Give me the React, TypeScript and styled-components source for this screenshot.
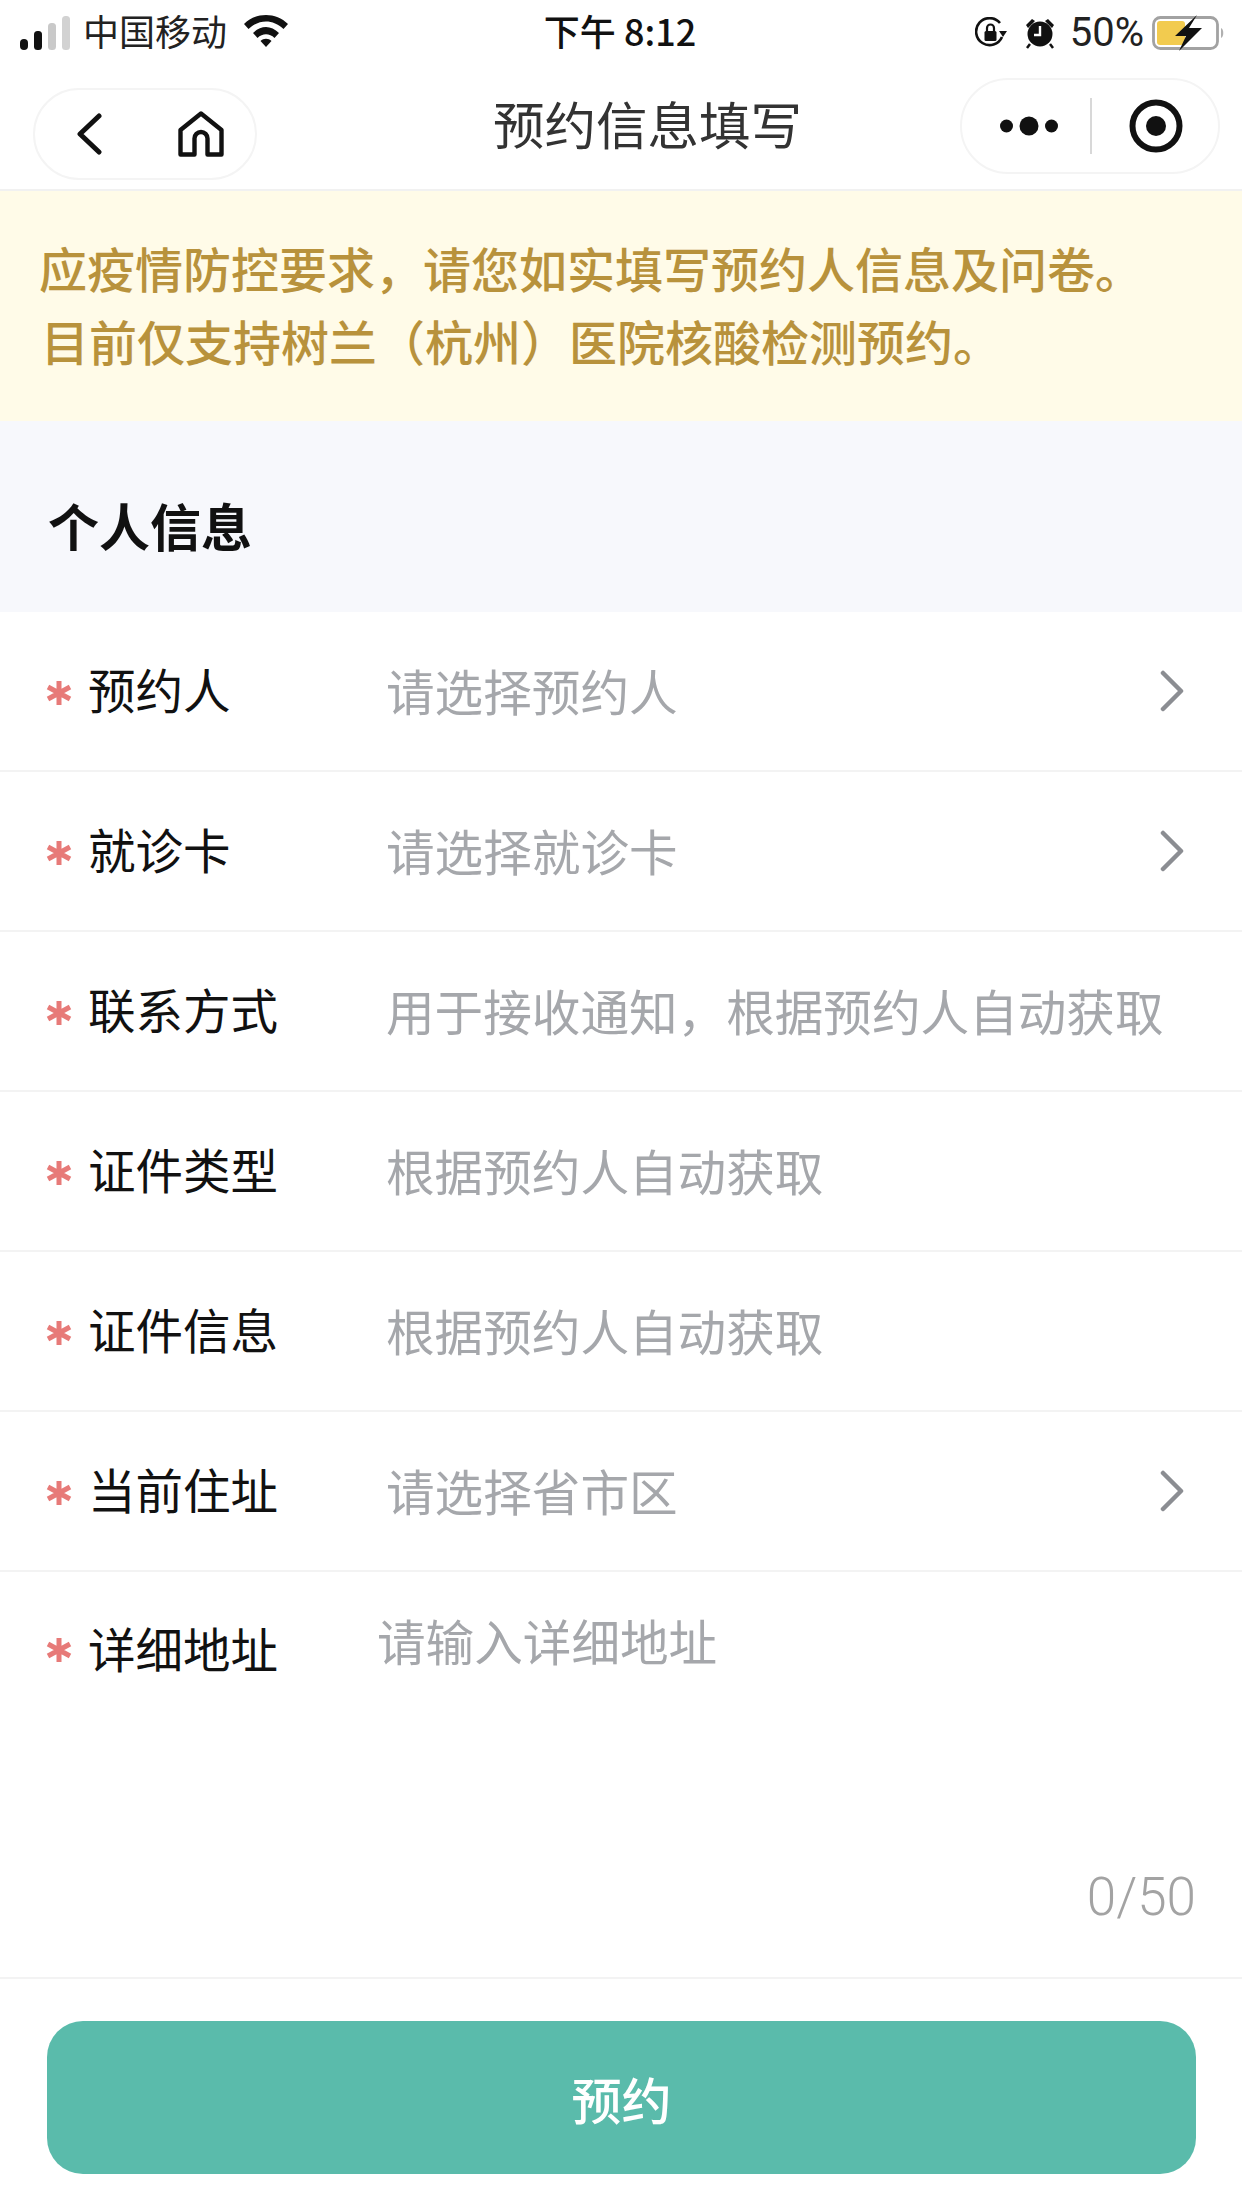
import React from 'react'
import styled, { createGlobalStyle } from 'styled-components'

const GlobalStyle = createGlobalStyle`
  html, body {
    margin: 0;
    padding: 0;
    background: #fff;
  }
  body {
    font-family: "Noto Sans CJK SC", "Noto Sans", sans-serif;
  }
`

const Page = styled.div`
  width: 1242px;
  height: 2208px;
  background: #fff;
  display: flex;
  flex-direction: column;
  overflow: hidden;
`

const StatusBar = styled.div`
  height: 66px;
  padding: 0 16px 0 20px;
  display: grid;
  grid-template-columns: 1fr auto 1fr;
  align-items: center;
  color: #111;
  font-size: 36px;
  line-height: 1;
`

const StatusSide = styled.div<{ $end?: boolean }>`
  display: flex;
  align-items: center;
  justify-content: ${(props) => (props.$end ? 'flex-end' : 'flex-start')};
`

const Carrier = styled.span`
  margin: 0 16px 6px 11px;
  font-size: 36px;
  color: #222;
`

const Clock = styled.span`
  font-family: "Noto Sans CJK SC", sans-serif;
  font-weight: 500;
  font-size: 36px;
  margin: 0 6px 6px 0;
  color: #111;
`

const Percent = styled.span`
  font-family: "Roboto", sans-serif;
  font-size: 40px;
  margin: 0 8px 0 15px;
  color: #222;
`

const AlarmGap = styled.span`
  width: 18px;
`

const WifiWrap = styled.span`
  display: flex;
  margin-bottom: 6px;
`

const NavBar = styled.div`
  height: 123px;
  display: flex;
  align-items: flex-start;
  border-bottom: 2px solid #f1f1f1;
  position: relative;
`

const Capsule = styled.div<{ $width: number; $height: number; $top: number }>`
  box-sizing: border-box;
  width: ${(props) => props.$width}px;
  height: ${(props) => props.$height}px;
  margin-top: ${(props) => props.$top}px;
  border: 2px solid #f4f4f4;
  border-radius: 48px;
  display: flex;
  align-items: center;
  flex: none;
`

const LeftCapsule = styled(Capsule)`
  margin-left: 33px;
  padding-left: 41px;
  gap: 76px;
`

const RightCapsule = styled(Capsule)`
  margin-right: 22px;
  padding-left: 38px;
`

const NavTitle = styled.h1`
  flex: 1;
  margin: 22px 0 0;
  padding: 2px 0 0 78px;
  text-align: center;
  font-size: 51.5px;
  line-height: 66px;
  font-weight: 400;
  color: #333;
`

const MoreDivider = styled.div`
  width: 2px;
  height: 56px;
  background: #d8d8d8;
  margin: 0 37px 0 32px;
`

const Notice = styled.div`
  height: 230px;
  box-sizing: border-box;
  padding: 40px 30px 0 39px;
  background: #fffbe8;
  color: #b8923c;
  font-size: 48px;
  line-height: 73px;
  font-weight: 500;
  white-space: nowrap;
`

const NoticeLine = styled.div<{ $indent?: number }>`
  padding-left: ${(props) => props.$indent ?? 0}px;
`

const SectionHead = styled.div`
  height: 191px;
  box-sizing: border-box;
  padding: 68px 0 0 48px;
  background: #f7f8fc;
  font-size: 51px;
  line-height: 72px;
  font-weight: 700;
  color: #111;
`

const Row = styled.div`
  height: 160px;
  box-sizing: border-box;
  display: flex;
  align-items: center;
  padding: 0 58px 0 46px;
  border-bottom: 2px solid #f3f3f3;
`

const Star = styled.span`
  width: 26px;
  height: 26px;
  flex: none;
  margin-right: 16px;
  margin-top: 4px;
  display: flex;
`

const Label = styled.span`
  width: 298px;
  flex: none;
  font-size: 47.5px;
  line-height: 64px;
  margin-bottom: 4px;
  color: #111;
`

const Value = styled.span`
  flex: 1;
  font-size: 48.6px;
  line-height: 64px;
  margin-bottom: 2px;
  color: #a5a7ab;
  white-space: nowrap;
`

const Chevron = styled.svg`
  width: 24px;
  height: 42px;
  flex: none;
`

const AddressRow = styled.div`
  height: 407px;
  box-sizing: border-box;
  padding: 44px 46px 0 46px;
  border-bottom: 2px solid #f3f3f3;
  display: flex;
  flex-direction: column;
`

const AddressTop = styled.div`
  display: flex;
  align-items: flex-start;
  flex: 1;
`

const AddressLabel = styled(Label)`
  width: 289px;
  margin: 0;
`

const AddressStar = styled(Star)`
  margin-top: 21px;
`

const AddressHint = styled.span`
  font-size: 48.6px;
  line-height: 56px;
  color: #a5a7ab;
  margin-top: -4px;
`

const Counter = styled.div`
  align-self: flex-end;
  font-family: "Roboto", sans-serif;
  font-size: 53px;
  line-height: 60px;
  font-weight: 300;
  color: #a3a3a3;
  margin-bottom: 50px;
`

const Footer = styled.div`
  flex: 1;
  padding: 42px 46px 0 47px;
`

const SubmitButton = styled.button`
  width: 100%;
  height: 153px;
  border: none;
  border-radius: 36px;
  background: #5abbab;
  color: #fff;
  font-family: inherit;
  font-size: 50px;
  font-weight: 500;
  padding: 0;
`

const StarIcon = () => (
  <svg width="26" height="26" viewBox="0 0 26 26">
    <path
      d="M13 1v24M2 7l22 12M24 7L2 19"
      stroke="#e77a78"
      strokeWidth="5"
      fill="none"
    />
  </svg>
)

const SignalIcon = () => (
  <svg width="52" height="34" viewBox="0 0 52 34">
    <rect x="0" y="23" width="8" height="11" rx="4" fill="#111" />
    <rect x="14" y="15" width="8" height="19" rx="3.500" fill="#111" />
    <rect x="28" y="7" width="8" height="27" rx="3.500" fill="#c9c9c9" />
    <rect x="42" y="0" width="8" height="34" rx="3.500" fill="#d2d2d2" />
  </svg>
)

const WifiIcon = () => (
  <svg width="46" height="34" viewBox="0 0 46 34">
    <path d="M1 11C13-1 33-1 45 11l-4.500 5C30 6 16 6 5.500 16z" fill="#111" />
    <path d="M10 20c8-8 18-8 26 0l-4.500 5c-5-5-12-5-17 0z" fill="#111" />
    <path d="M17.500 28c3-3 8-3 11 0L23 34z" fill="#111" />
  </svg>
)

const LockRotateIcon = () => (
  <svg width="32" height="32" viewBox="0 0 32 32">
    <path d="M27 20A13.500 13.500 0 1 1 25 6" fill="none" stroke="#111" strokeWidth="2.600" />
    <path d="M24 14h8l-4 6z" fill="#111" />
    <rect x="9.500" y="14" width="12" height="10" rx="1.500" fill="#111" />
    <path d="M12 14v-3a3.500 3.500 0 0 1 7 0v3" fill="none" stroke="#111" strokeWidth="2.200" />
  </svg>
)

const AlarmIcon = () => (
  <svg width="30" height="32" viewBox="0 0 30 32">
    <circle cx="15" cy="17" r="12.500" fill="#111" />
    <path d="M1 8l6-6 3 2-7 7zM29 8l-6-6-3 2 7 7z" fill="#111" />
    <path d="M5 27l-3 4M25 27l3 4" stroke="#111" strokeWidth="2.500" />
    <path d="M15 9v9H9" fill="none" stroke="#fff" strokeWidth="2.400" />
  </svg>
)

const BatteryIcon = () => (
  <svg width="74" height="36" viewBox="0 0 74 36">
    <rect x="1.500" y="2.500" width="64" height="31" rx="7" fill="none" stroke="#a2a2a2" strokeWidth="2.800" />
    <rect x="5" y="6" width="28" height="24" rx="3" fill="#f2cb4f" />
    <path d="M69 13c3 1 3 9 0 10z" fill="#b0b0b0" />
    <path d="M45 0L23 21h11l-7 15 23-23H37z" fill="#111" />
  </svg>
)

const BackIcon = () => (
  <svg width="26" height="42" viewBox="0 0 26 42">
    <path d="M23 3L4 21l19 18" fill="none" stroke="#111" strokeWidth="5" strokeLinecap="round" strokeLinejoin="round" />
  </svg>
)

const HomeIcon = () => (
  <svg width="46" height="46" viewBox="0 0 46 46">
    <path
      d="M2.500 43.500V19L23 2.500 43.500 19v24.500H29.500V27.500a6.500 6.500 0 0 0-13 0v16z"
      fill="none"
      stroke="#111"
      strokeWidth="4.400"
      strokeLinejoin="round"
    />
  </svg>
)

const MoreIcon = () => (
  <svg width="58" height="24" viewBox="0 0 58 24">
    <circle cx="6.500" cy="12" r="6.500" fill="#111" />
    <circle cx="29" cy="12" r="9.500" fill="#111" />
    <circle cx="51.500" cy="12" r="6.500" fill="#111" />
  </svg>
)

const TargetIcon = () => (
  <svg width="54" height="54" viewBox="0 0 54 54">
    <circle cx="27" cy="27" r="23.500" fill="none" stroke="#111" strokeWidth="6" />
    <circle cx="27" cy="27" r="10" fill="#111" />
  </svg>
)

const ChevronIcon = () => (
  <Chevron viewBox="0 0 24 42">
    <path d="M3 3l18 18L3 39" fill="none" stroke="#8b8d92" strokeWidth="4.500" strokeLinecap="round" strokeLinejoin="round" />
  </Chevron>
)

interface FieldConfig {
  label: string
  hint: string
  arrow?: boolean
}

const fields: FieldConfig[] = [
  { label: '预约人', hint: '请选择预约人', arrow: true },
  { label: '就诊卡', hint: '请选择就诊卡', arrow: true },
  { label: '联系方式', hint: '用于接收通知，根据预约人自动获取' },
  { label: '证件类型', hint: '根据预约人自动获取' },
  { label: '证件信息', hint: '根据预约人自动获取' },
  { label: '当前住址', hint: '请选择省市区', arrow: true },
]

const App: React.FC = () => {
  return (
    <Page>
      <GlobalStyle />
      <StatusBar>
        <StatusSide>
          <SignalIcon />
          <Carrier>中国移动</Carrier>
          <WifiWrap>
            <WifiIcon />
          </WifiWrap>
        </StatusSide>
        <Clock>下午 8:12</Clock>
        <StatusSide $end>
          <LockRotateIcon />
          <AlarmGap />
          <AlarmIcon />
          <Percent>50%</Percent>
          <BatteryIcon />
        </StatusSide>
      </StatusBar>
      <NavBar>
        <LeftCapsule $width={224} $height={92} $top={22}>
          <BackIcon />
          <HomeIcon />
        </LeftCapsule>
        <NavTitle>预约信息填写</NavTitle>
        <RightCapsule $width={260} $height={96} $top={12}>
          <MoreIcon />
          <MoreDivider />
          <TargetIcon />
        </RightCapsule>
      </NavBar>
      <Notice>
        <NoticeLine>应疫情防控要求，请您如实填写预约人信息及问卷。</NoticeLine>
        <NoticeLine $indent={2}>目前仅支持树兰（杭州）医院核酸检测预约。</NoticeLine>
      </Notice>
      <SectionHead>个人信息</SectionHead>
      {fields.map((field) => (
        <Row key={field.label}>
          <Star>
            <StarIcon />
          </Star>
          <Label>{field.label}</Label>
          <Value>{field.hint}</Value>
          {field.arrow && <ChevronIcon />}
        </Row>
      ))}
      <AddressRow>
        <AddressTop>
          <AddressStar>
            <StarIcon />
          </AddressStar>
          <AddressLabel>详细地址</AddressLabel>
          <AddressHint>请输入详细地址</AddressHint>
        </AddressTop>
        <Counter>0/50</Counter>
      </AddressRow>
      <Footer>
        <SubmitButton>预约</SubmitButton>
      </Footer>
    </Page>
  )
}

export default App
